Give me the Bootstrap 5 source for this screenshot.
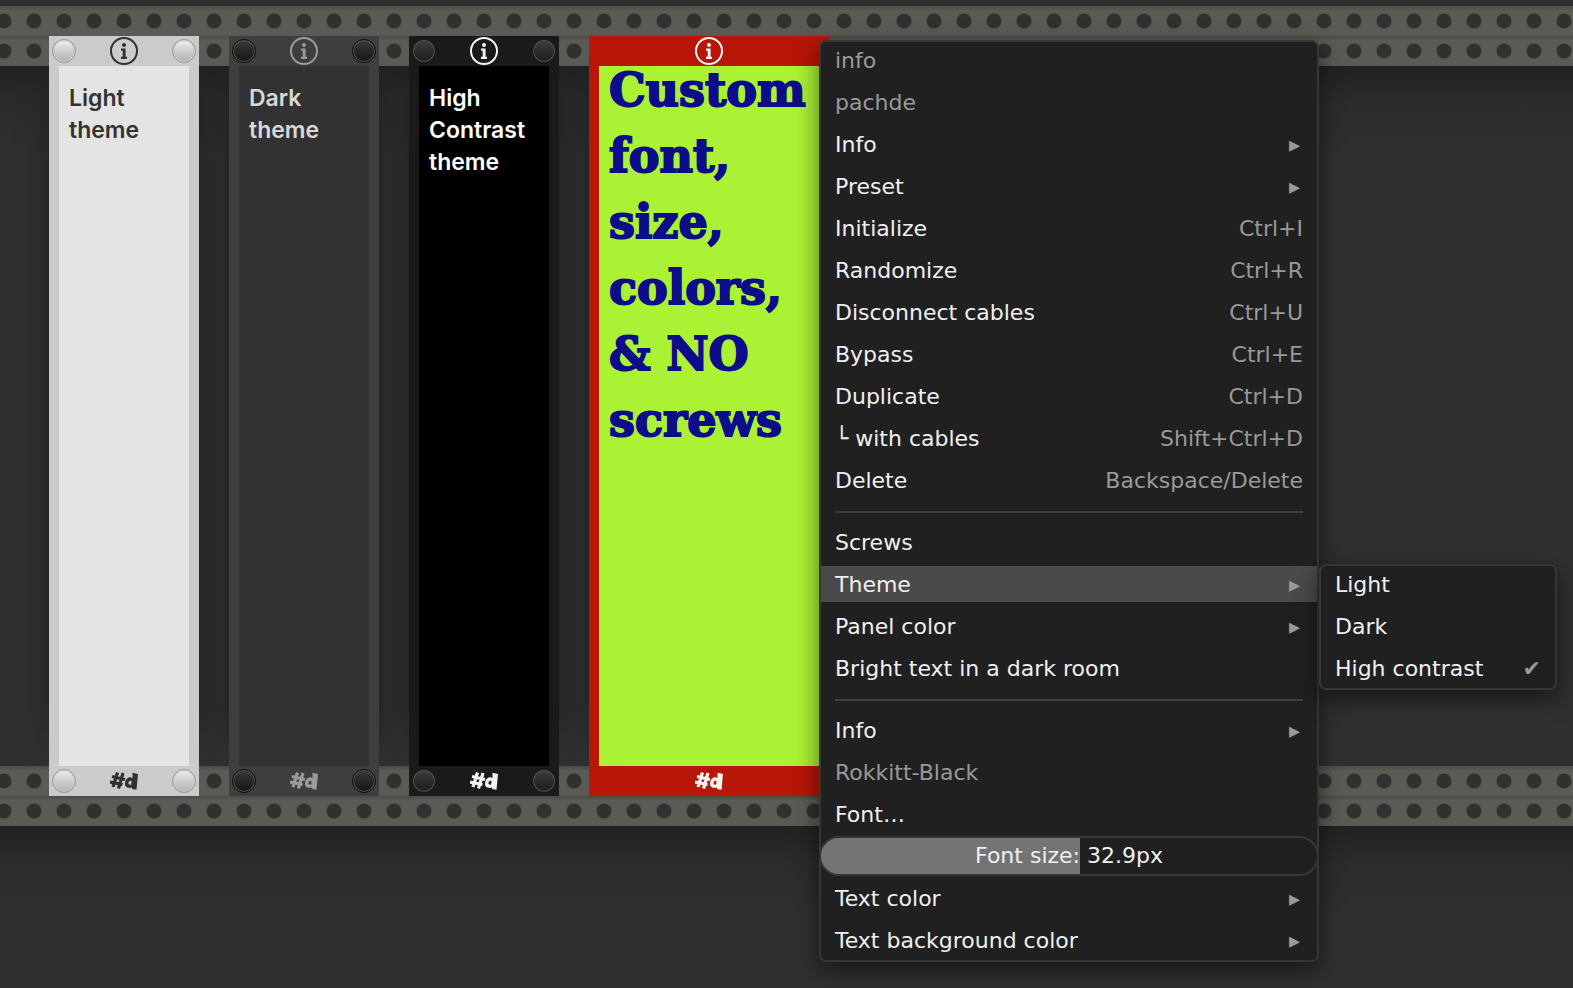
<!DOCTYPE html>
<html lang="en">
<head>
<meta charset="utf-8">
<meta name="viewport" content="width=device-width, initial-scale=1">
<title>Info modules</title>
<link href="https://cdn.jsdelivr.net/npm/bootstrap@5.3.0/dist/css/bootstrap.min.css" rel="stylesheet">
<style>
  body { background: #303030; font-family: "DejaVu Sans", sans-serif; }
  .rack { min-height: 100vh; padding-top: 6px; overflow: hidden; }
  .rail {
    height: 30px;
    background:
      radial-gradient(circle at 15px 15px, #303030 6px, #333332 7px, transparent 8px) -11px 0 / 30px 30px repeat-x,
      linear-gradient(#4d4c47, #54534e 3px, #5b5a55 4px, #5b5a55 29px, #54534f);
  }
  .bay {
    height: 760px;
    padding-left: 49px;
    gap: 30px;
    position: relative;
    z-index: 0;
  }
  .bay-back { position: absolute; inset: 0; z-index: -2; }
  .bay-well { background: linear-gradient(#212121, #2b2b2b 36px, #303030 90px); }
  .shade { height: 160px; background: linear-gradient(#222, #2b2b2b 36px, #303030 90px); }
  .unit {
    width: 150px;
    position: relative;
    background: var(--frame);
    color: var(--ink);
  }
  .unit::before {
    content: "";
    position: absolute;
    inset: 60px 0;
    z-index: -1;
    box-shadow: 0 0 30px rgba(0, 0, 0, .35);
  }
  .unit-wide { width: 240px; }
  .unit-end { height: 30px; padding: 0 3px; }
  .unit-face {
    margin: 0 10px;
    padding: 16px 10px;
    background: var(--face);
    font: 600 23px/32px Inter, sans-serif;
  }
  .unit-wide .unit-face {
    padding: 0 10px;
    font: 700 46px/66px "DejaVu Serif", serif;
    -webkit-text-stroke: 2px currentColor;
  }
  .pull-up { margin-top: -9px; }
  .light { --frame: #cbcbcb; --face: #e4e4e4; --ink: #333; --mark: #303030; --s1: #eee; --s2: #b0b0b0; --ring: #999; --ring2: #ccc; }
  .dim { --frame: #3e3e3e; --face: #323232; --ink: #d8d8d8; --mark: #9a9a9a; --s1: #3a3a3a; --s2: #141414; --ring: #0c0c0c; --ring2: #555; }
  .contrast { --frame: #1a1a1a; --face: #000; --ink: #fff; --mark: #f4f4f4; --s1: #3c3c3c; --s2: #1c1c1c; --ring: #1a1a1a; --ring2: #555; }
  .custom { --frame: #b71608; --face: #abf235; --ink: #0d0d8c; --mark: #f4f4f4; }
  .screw {
    width: 24px; height: 24px;
    border: 1px solid var(--ring);
    background: linear-gradient(var(--s1), var(--s2));
    box-shadow: inset 0 0 0 1px var(--ring2);
  }
  .glyph { color: var(--mark); }
  .menu-panel {
    position: absolute;
    z-index: 5;
    row-gap: 6px;
    background: #202020;
    border: 2px solid #363636;
    border-radius: 7px;
    padding-bottom: 2px;
    box-shadow: 0 8px 24px rgba(0, 0, 0, .55);
  }
  .menu-main { left: 819px; top: 40px; width: 500px; }
  .menu-sub { left: 1319px; top: 564px; width: 238px; z-index: 6; }
  .menu-row {
    width: 100%;
    height: 36px;
    padding: 2px 14px 0;
    border: 0;
    background: none;
    color: #f0f0f0;
    font-size: 22px;
    line-height: 34px;
    white-space: pre;
  }
  .menu-row:disabled, .menu-row .hint { color: #999; }
  .menu-row.current { background: #4a4a4a; }
  .menu-line { height: 2px; margin: 7px 14px 5px; background: #404040; }
  .menu-row .arrow { width: 17px; }
  .size-slider { margin: -2px; height: 40px; }
  .size-slider input {
    appearance: none;
    display: block;
    width: 100%;
    height: 40px;
    margin: 0;
    border: 2px solid #363636;
    border-radius: 20px;
    background: linear-gradient(90deg, #747474 var(--fill), #202020 var(--fill));
  }
  .size-slider input::-webkit-slider-thumb { appearance: none; width: 0; height: 0; }
  .size-slider label {
    position: absolute; inset: 0;
    color: #f0f0f0; font-size: 22px; line-height: 40px; text-align: center; pointer-events: none;
  }
</style>
</head>
<body>
<svg class="d-none" xmlns="http://www.w3.org/2000/svg">
  <symbol id="info" viewBox="0 0 28 28">
    <circle cx="14" cy="14" r="13" fill="none" stroke="currentColor" stroke-width="2"/>
    <circle cx="14" cy="8" r="2" fill="currentColor"/>
    <path d="M11 11.500h4.600v8.300H17V22h-6v-2.200h1.700v-6H11z" fill="currentColor"/>
  </symbol>
  <symbol id="logo" viewBox="0 0 28 18">
    <path d="M7.500.5 3 15M13 1 8.500 16.500M2 4.500 15 7.500M0 10l12.500 2.500" fill="none" stroke="currentColor" stroke-width="3.200"/>
    <path fill="currentColor" fill-rule="evenodd" d="M22.500.8 28 2l-1.500 15.800-4.500-.8v-1.500c-3 1.200-7.500 0-7-4 .5-5 4-7.500 7.500-5.500zM21.500 9c-2-.8-3 .7-3 2.300 0 1.500 1.800 1.900 2.700.9z"/>
  </symbol>
</svg>

<main class="rack position-relative">
  <div class="rail"></div>
  <div class="bay d-flex">
    <div class="bay-back d-flex flex-column">
      <div class="rail"></div>
      <div class="bay-well flex-grow-1"></div>
      <div class="rail"></div>
    </div>
    <section class="unit light d-flex flex-column">
      <div class="unit-end d-flex justify-content-between align-items-center"><i class="screw rounded-circle"></i><svg class="glyph" width="28" height="28"><use href="#info"/></svg><i class="screw rounded-circle"></i></div>
      <div class="unit-face flex-grow-1">Light<br>theme</div>
      <div class="unit-end d-flex justify-content-between align-items-center"><i class="screw rounded-circle"></i><svg class="glyph" width="28" height="18"><use href="#logo"/></svg><i class="screw rounded-circle"></i></div>
    </section>
    <section class="unit dim d-flex flex-column">
      <div class="unit-end d-flex justify-content-between align-items-center"><i class="screw rounded-circle"></i><svg class="glyph" width="28" height="28"><use href="#info"/></svg><i class="screw rounded-circle"></i></div>
      <div class="unit-face flex-grow-1">Dark<br>theme</div>
      <div class="unit-end d-flex justify-content-between align-items-center"><i class="screw rounded-circle"></i><svg class="glyph" width="28" height="18"><use href="#logo"/></svg><i class="screw rounded-circle"></i></div>
    </section>
    <section class="unit contrast d-flex flex-column">
      <div class="unit-end d-flex justify-content-between align-items-center"><i class="screw rounded-circle"></i><svg class="glyph" width="28" height="28"><use href="#info"/></svg><i class="screw rounded-circle"></i></div>
      <div class="unit-face flex-grow-1">High<br>Contrast<br>theme</div>
      <div class="unit-end d-flex justify-content-between align-items-center"><i class="screw rounded-circle"></i><svg class="glyph" width="28" height="18"><use href="#logo"/></svg><i class="screw rounded-circle"></i></div>
    </section>
    <section class="unit unit-wide custom d-flex flex-column">
      <div class="unit-end d-flex justify-content-center align-items-center"><svg class="glyph" width="28" height="28"><use href="#info"/></svg></div>
      <div class="unit-face d-flex flex-grow-1 text-nowrap"><div class="pull-up">Custom<br>font,<br>size,<br>colors,<br>&amp; NO<br>screws</div></div>
      <div class="unit-end d-flex justify-content-center align-items-center"><svg class="glyph" width="28" height="18"><use href="#logo"/></svg></div>
    </section>
  </div>
  <div class="rail"></div>
  <div class="shade"></div>

  <div class="menu-panel menu-main d-flex flex-column">
    <button class="menu-row text-start" disabled>info</button>
    <button class="menu-row text-start" disabled>pachde</button>
    <button class="menu-row d-flex justify-content-between"><span>Info</span><span class="hint arrow">▸</span></button>
    <button class="menu-row d-flex justify-content-between"><span>Preset</span><span class="hint arrow">▸</span></button>
    <button class="menu-row d-flex justify-content-between"><span>Initialize</span><span class="hint">Ctrl+I</span></button>
    <button class="menu-row d-flex justify-content-between"><span>Randomize</span><span class="hint">Ctrl+R</span></button>
    <button class="menu-row d-flex justify-content-between"><span>Disconnect cables</span><span class="hint">Ctrl+U</span></button>
    <button class="menu-row d-flex justify-content-between"><span>Bypass</span><span class="hint">Ctrl+E</span></button>
    <button class="menu-row d-flex justify-content-between"><span>Duplicate</span><span class="hint">Ctrl+D</span></button>
    <button class="menu-row d-flex justify-content-between"><span>└ with cables</span><span class="hint">Shift+Ctrl+D</span></button>
    <button class="menu-row d-flex justify-content-between"><span>Delete</span><span class="hint">Backspace/Delete</span></button>
    <div class="menu-line" role="separator"></div>
    <button class="menu-row text-start">Screws</button>
    <button class="menu-row current d-flex justify-content-between"><span>Theme</span><span class="hint arrow">▸</span></button>
    <button class="menu-row d-flex justify-content-between"><span>Panel color</span><span class="hint arrow">▸</span></button>
    <button class="menu-row text-start">Bright text in a dark room</button>
    <div class="menu-line" role="separator"></div>
    <button class="menu-row d-flex justify-content-between"><span>Info</span><span class="hint arrow">▸</span></button>
    <button class="menu-row text-start" disabled>Rokkitt-Black</button>
    <button class="menu-row text-start">Font…</button>
    <div class="size-slider position-relative"><input id="fs" type="range" min="0" max="63" step="0.1" value="32.9" style="--fill:52.2%"><label for="fs">Font size: 32.9px</label></div>
    <button class="menu-row d-flex justify-content-between"><span>Text color</span><span class="hint arrow">▸</span></button>
    <button class="menu-row d-flex justify-content-between"><span>Text background color</span><span class="hint arrow">▸</span></button>
  </div>
  <div class="menu-panel menu-sub d-flex flex-column">
    <button class="menu-row text-start">Light</button>
    <button class="menu-row text-start">Dark</button>
    <button class="menu-row d-flex justify-content-between"><span>High contrast</span><span class="hint">✔</span></button>
  </div>
</main>
<script src="https://cdn.jsdelivr.net/npm/bootstrap@5.3.0/dist/js/bootstrap.bundle.min.js"></script>
</body>
</html>
